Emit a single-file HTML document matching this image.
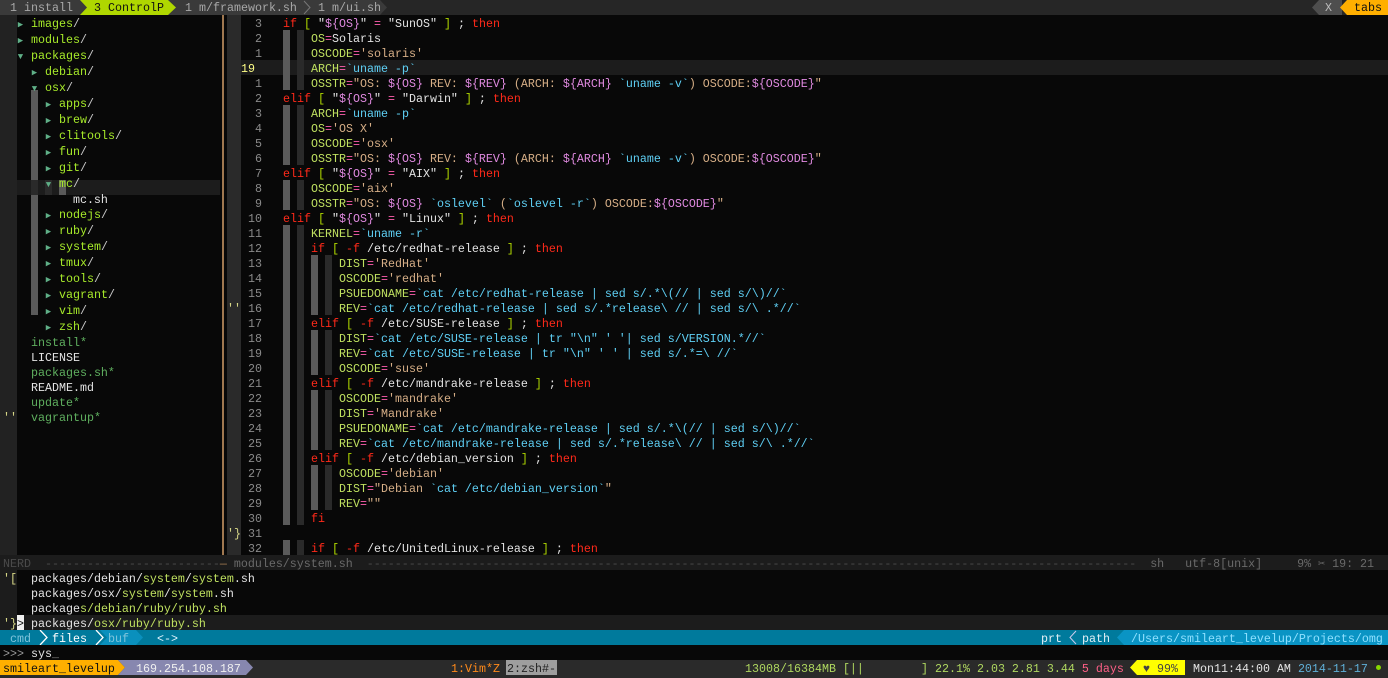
<!DOCTYPE html>
<html><head><meta charset="utf-8"><style>
*{margin:0;padding:0}
body{width:1388px;height:678px;background:#080808;overflow:hidden;position:relative;font-family:"Liberation Mono","DejaVu Sans Mono",monospace;font-size:11.6667px;line-height:15px;color:#e4e4e4}
.abs{position:absolute}
pre{position:absolute;font:inherit;white-space:pre;line-height:15px;padding-top:2px}
i{font-style:normal}
.k{color:#ff2a1a}.b{color:#afd700}.w{color:#e4e4e4}.p{color:#e08ae0}.v{color:#bfe060}.e{color:#ff5faf}.s{color:#d7af87}.c{color:#5fd0f5}
.n{color:#8a8a8a}
.ar{display:inline-block;width:7px;color:#5faf87;font-size:9px;text-align:center}
.dir{color:#a8ec2a}.sl{color:#c8c8c8}.ex{color:#5faf5f}
.ca{display:inline-block;width:7px;height:15px;background:#5a5a5a;vertical-align:top;margin-top:-2px}
.cd{display:inline-block;width:7px;height:15px;background:#2a2a2a;vertical-align:top;margin-top:-2px}
</style></head><body>

<!-- tabline -->
<div class="abs" style="left:0;top:0;width:1388px;height:15px;background:#262626"></div>
<div class="abs" style="left:0;top:0;width:380px;height:15px;background:#3a3a3a"></div>
<svg class="abs" style="left:0;top:0" width="1388" height="15">
<polygon points="80,0 168,0 176,7.5 168,15 80,15 87,7.5" fill="#afd700"/>
<polygon points="380,0 387,7.5 380,15" fill="#3a3a3a"/>
<polyline points="304,1 310,7.5 304,14" fill="none" stroke="#777" stroke-width="1"/>
<polygon points="1312,7.5 1319,0 1342,0 1342,15 1319,15" fill="#4e4e4e"/>
<polygon points="1340,7.5 1347,0 1388,0 1388,15 1347,15" fill="#ffaf00"/>
</svg>
<pre style="left:10px;top:-1px;color:#a8a8a8">1 install</pre>
<pre style="left:94px;top:-1px;color:#111">3 ControlP</pre>
<pre style="left:185px;top:-1px;color:#a8a8a8">1 m/framework.sh</pre>
<pre style="left:318px;top:-1px;color:#a8a8a8">1 m/ui.sh</pre>
<pre style="left:1325px;top:-1px;color:#bcbcbc">X</pre>
<pre style="left:1354px;top:-1px;color:#111">tabs</pre>

<!-- gutters & cursor lines -->
<div class="abs" style="left:0;top:15px;width:17px;height:540px;background:#222"></div>
<div class="abs" style="left:227px;top:15px;width:14px;height:540px;background:#2a2a2a"></div>
<div class="abs" style="left:17px;top:180px;width:203px;height:15px;background:#1c1c1c"></div>
<div class="abs" style="left:241px;top:60px;width:1147px;height:15px;background:#1c1c1c"></div>
<div class="abs" style="left:222px;top:15px;width:2px;height:540px;background:#a07850"></div>
<div class="abs" style="left:31px;top:90px;width:7px;height:225px;background:#5a5a5a"></div>
<div class="abs" style="left:31px;top:180px;width:7px;height:15px;background:#2a2a2a"></div>
<div class="abs" style="left:45px;top:180px;width:7px;height:15px;background:#2a2a2a"></div>
<div class="abs" style="left:59px;top:180px;width:7px;height:15px;background:#5a5a5a"></div>

<!-- tree -->
<pre style="left:3px;top:15px">  <i class=ar>▶</i> <i class=dir>images</i><i class=sl>/</i>
  <i class=ar>▶</i> <i class=dir>modules</i><i class=sl>/</i>
  <i class=ar>▼</i> <i class=dir>packages</i><i class=sl>/</i>
    <i class=ar>▶</i> <i class=dir>debian</i><i class=sl>/</i>
    <i class=ar>▼</i> <i class=dir>osx</i><i class=sl>/</i>
      <i class=ar>▶</i> <i class=dir>apps</i><i class=sl>/</i>
      <i class=ar>▶</i> <i class=dir>brew</i><i class=sl>/</i>
      <i class=ar>▶</i> <i class=dir>clitools</i><i class=sl>/</i>
      <i class=ar>▶</i> <i class=dir>fun</i><i class=sl>/</i>
      <i class=ar>▶</i> <i class=dir>git</i><i class=sl>/</i>
      <i class=ar>▼</i> <i class=dir>mc</i><i class=sl>/</i>
          mc.sh
      <i class=ar>▶</i> <i class=dir>nodejs</i><i class=sl>/</i>
      <i class=ar>▶</i> <i class=dir>ruby</i><i class=sl>/</i>
      <i class=ar>▶</i> <i class=dir>system</i><i class=sl>/</i>
      <i class=ar>▶</i> <i class=dir>tmux</i><i class=sl>/</i>
      <i class=ar>▶</i> <i class=dir>tools</i><i class=sl>/</i>
      <i class=ar>▶</i> <i class=dir>vagrant</i><i class=sl>/</i>
      <i class=ar>▶</i> <i class=dir>vim</i><i class=sl>/</i>
      <i class=ar>▶</i> <i class=dir>zsh</i><i class=sl>/</i>
    <i class=ex>install*</i>
    LICENSE
    <i class=ex>packages.sh*</i>
    README.md
    <i class=ex>update*</i>
<i style="color:#d7d787">''</i>  <i class=ex>vagrantup*</i></pre>

<!-- signs -->
<pre style="left:227px;top:300px;color:#d7d787">''</pre>
<pre style="left:227px;top:525px;color:#d7d787">'}</pre>

<!-- editor -->
<pre style="left:241px;top:15px"><i class=n>  3</i>   <i class=k>if</i> <i class=b>[</i> <i class=w>"</i><i class=p>${OS}</i><i class=w>"</i> <i class=e>=</i> <i class=w>"SunOS"</i> <i class=b>]</i> ; <i class=k>then</i>
<i class=n>  2</i>   <i class=ca></i> <i class=cd></i> <i class=v>OS</i><i class=e>=</i>Solaris
<i class=n>  1</i>   <i class=ca></i> <i class=cd></i> <i class=v>OSCODE</i><i class=e>=</i><i class=s>'solaris'</i>
<i style="color:#ffff87">19</i>    <i class=ca></i> <i class=cd></i> <i class=v>ARCH</i><i class=e>=</i><i class=c>`uname -p`</i>
<i class=n>  1</i>   <i class=ca></i> <i class=cd></i> <i class=v>OSSTR</i><i class=e>=</i><i class=s>"OS: </i><i class=p>${OS}</i><i class=s> REV: </i><i class=p>${REV}</i><i class=s> (ARCH: </i><i class=p>${ARCH}</i><i class=s> </i><i class=c>`uname -v`</i><i class=s>) OSCODE:</i><i class=p>${OSCODE}</i><i class=s>"</i>
<i class=n>  2</i>   <i class=k>elif</i> <i class=b>[</i> <i class=w>"</i><i class=p>${OS}</i><i class=w>"</i> <i class=e>=</i> <i class=w>"Darwin"</i> <i class=b>]</i> ; <i class=k>then</i>
<i class=n>  3</i>   <i class=ca></i> <i class=cd></i> <i class=v>ARCH</i><i class=e>=</i><i class=c>`uname -p`</i>
<i class=n>  4</i>   <i class=ca></i> <i class=cd></i> <i class=v>OS</i><i class=e>=</i><i class=s>'OS X'</i>
<i class=n>  5</i>   <i class=ca></i> <i class=cd></i> <i class=v>OSCODE</i><i class=e>=</i><i class=s>'osx'</i>
<i class=n>  6</i>   <i class=ca></i> <i class=cd></i> <i class=v>OSSTR</i><i class=e>=</i><i class=s>"OS: </i><i class=p>${OS}</i><i class=s> REV: </i><i class=p>${REV}</i><i class=s> (ARCH: </i><i class=p>${ARCH}</i><i class=s> </i><i class=c>`uname -v`</i><i class=s>) OSCODE:</i><i class=p>${OSCODE}</i><i class=s>"</i>
<i class=n>  7</i>   <i class=k>elif</i> <i class=b>[</i> <i class=w>"</i><i class=p>${OS}</i><i class=w>"</i> <i class=e>=</i> <i class=w>"AIX"</i> <i class=b>]</i> ; <i class=k>then</i>
<i class=n>  8</i>   <i class=ca></i> <i class=cd></i> <i class=v>OSCODE</i><i class=e>=</i><i class=s>'aix'</i>
<i class=n>  9</i>   <i class=ca></i> <i class=cd></i> <i class=v>OSSTR</i><i class=e>=</i><i class=s>"OS: </i><i class=p>${OS}</i><i class=s> </i><i class=c>`oslevel`</i><i class=s> (</i><i class=c>`oslevel -r`</i><i class=s>) OSCODE:</i><i class=p>${OSCODE}</i><i class=s>"</i>
<i class=n> 10</i>   <i class=k>elif</i> <i class=b>[</i> <i class=w>"</i><i class=p>${OS}</i><i class=w>"</i> <i class=e>=</i> <i class=w>"Linux"</i> <i class=b>]</i> ; <i class=k>then</i>
<i class=n> 11</i>   <i class=ca></i> <i class=cd></i> <i class=v>KERNEL</i><i class=e>=</i><i class=c>`uname -r`</i>
<i class=n> 12</i>   <i class=ca></i> <i class=cd></i> <i class=k>if</i> <i class=b>[</i> <i class=k>-f</i> /etc/redhat-release <i class=b>]</i> ; <i class=k>then</i>
<i class=n> 13</i>   <i class=ca></i> <i class=cd></i> <i class=ca></i> <i class=cd></i> <i class=v>DIST</i><i class=e>=</i><i class=s>'RedHat'</i>
<i class=n> 14</i>   <i class=ca></i> <i class=cd></i> <i class=ca></i> <i class=cd></i> <i class=v>OSCODE</i><i class=e>=</i><i class=s>'redhat'</i>
<i class=n> 15</i>   <i class=ca></i> <i class=cd></i> <i class=ca></i> <i class=cd></i> <i class=v>PSUEDONAME</i><i class=e>=</i><i class=c>`cat /etc/redhat-release | sed s/.*\(// | sed s/\)//`</i>
<i class=n> 16</i>   <i class=ca></i> <i class=cd></i> <i class=ca></i> <i class=cd></i> <i class=v>REV</i><i class=e>=</i><i class=c>`cat /etc/redhat-release | sed s/.*release\ // | sed s/\ .*//`</i>
<i class=n> 17</i>   <i class=ca></i> <i class=cd></i> <i class=k>elif</i> <i class=b>[</i> <i class=k>-f</i> /etc/SUSE-release <i class=b>]</i> ; <i class=k>then</i>
<i class=n> 18</i>   <i class=ca></i> <i class=cd></i> <i class=ca></i> <i class=cd></i> <i class=v>DIST</i><i class=e>=</i><i class=c>`cat /etc/SUSE-release | tr "\n" ' '| sed s/VERSION.*//`</i>
<i class=n> 19</i>   <i class=ca></i> <i class=cd></i> <i class=ca></i> <i class=cd></i> <i class=v>REV</i><i class=e>=</i><i class=c>`cat /etc/SUSE-release | tr "\n" ' ' | sed s/.*=\ //`</i>
<i class=n> 20</i>   <i class=ca></i> <i class=cd></i> <i class=ca></i> <i class=cd></i> <i class=v>OSCODE</i><i class=e>=</i><i class=s>'suse'</i>
<i class=n> 21</i>   <i class=ca></i> <i class=cd></i> <i class=k>elif</i> <i class=b>[</i> <i class=k>-f</i> /etc/mandrake-release <i class=b>]</i> ; <i class=k>then</i>
<i class=n> 22</i>   <i class=ca></i> <i class=cd></i> <i class=ca></i> <i class=cd></i> <i class=v>OSCODE</i><i class=e>=</i><i class=s>'mandrake'</i>
<i class=n> 23</i>   <i class=ca></i> <i class=cd></i> <i class=ca></i> <i class=cd></i> <i class=v>DIST</i><i class=e>=</i><i class=s>'Mandrake'</i>
<i class=n> 24</i>   <i class=ca></i> <i class=cd></i> <i class=ca></i> <i class=cd></i> <i class=v>PSUEDONAME</i><i class=e>=</i><i class=c>`cat /etc/mandrake-release | sed s/.*\(// | sed s/\)//`</i>
<i class=n> 25</i>   <i class=ca></i> <i class=cd></i> <i class=ca></i> <i class=cd></i> <i class=v>REV</i><i class=e>=</i><i class=c>`cat /etc/mandrake-release | sed s/.*release\ // | sed s/\ .*//`</i>
<i class=n> 26</i>   <i class=ca></i> <i class=cd></i> <i class=k>elif</i> <i class=b>[</i> <i class=k>-f</i> /etc/debian_version <i class=b>]</i> ; <i class=k>then</i>
<i class=n> 27</i>   <i class=ca></i> <i class=cd></i> <i class=ca></i> <i class=cd></i> <i class=v>OSCODE</i><i class=e>=</i><i class=s>'debian'</i>
<i class=n> 28</i>   <i class=ca></i> <i class=cd></i> <i class=ca></i> <i class=cd></i> <i class=v>DIST</i><i class=e>=</i><i class=s>"Debian </i><i class=c>`cat /etc/debian_version`</i><i class=s>"</i>
<i class=n> 29</i>   <i class=ca></i> <i class=cd></i> <i class=ca></i> <i class=cd></i> <i class=v>REV</i><i class=e>=</i><i class=s>""</i>
<i class=n> 30</i>   <i class=ca></i> <i class=cd></i> <i class=k>fi</i>
<i class=n> 31</i>
<i class=n> 32</i>   <i class=ca></i> <i class=cd></i> <i class=k>if</i> <i class=b>[</i> <i class=k>-f</i> /etc/UnitedLinux-release <i class=b>]</i> ; <i class=k>then</i></pre>

<!-- statusline -->
<div class="abs" style="left:0;top:555px;width:1388px;height:15px;background:#1c1c1c"></div>
<pre style="left:3px;top:555px;color:#4a4a4a">NERD  -------------------------<i style="color:#a07850">—</i> <i style="color:#6a6a6a">modules/system.sh</i>  --------------------------------------------------------------------------------------------------------------  <i style="color:#6a6a6a">sh   utf-8[unix]     9% ✂ 19: 21</i></pre>

<!-- ctrlp matches -->
<div class="abs" style="left:0;top:570px;width:17px;height:60px;background:#1c1c1c"></div>
<div class="abs" style="left:17px;top:615px;width:1371px;height:15px;background:#1c1c1c"></div>
<div class="abs" style="left:17px;top:615px;width:7px;height:15px;background:#f0f0f0"></div>
<pre style="left:3px;top:570px"><i style="color:#d7d787">'[</i>  packages/debian/<i class=v>system</i>/<i class=v>system</i>.sh
    packages/osx/<i class=v>system</i>/<i class=v>system</i>.sh
    package<i class=v>s/debian/ruby/ruby.sh</i>
<i style="color:#d7d787">'}</i><i style="color:#111">&gt;</i> packages/<i class=v>osx/ruby/ruby.sh</i></pre>

<!-- ctrlp bar -->
<div class="abs" style="left:0;top:630px;width:1388px;height:15px;background:#007a9c"></div>
<svg class="abs" style="left:0;top:630px" width="1388" height="15">
<polygon points="100,0 136,0 143,7.5 136,15 100,15 107,7.5" fill="#0a90bd"/>
<polyline points="40,0 47,7.5 40,15" fill="none" stroke="#fff" stroke-width="1.3"/>
<polyline points="96,0 103,7.5 96,15" fill="none" stroke="#fff" stroke-width="1.3"/>
<polygon points="1124,0 1388,0 1388,15 1124,15 1117,7.5" fill="#0a94c4"/>
<polyline points="1076,1 1070,7.5 1076,14" fill="none" stroke="#cce" stroke-width="1"/>
</svg>
<pre style="left:10px;top:630px;color:#7fc4dc">cmd</pre>
<pre style="left:52px;top:630px;color:#fff">files</pre>
<pre style="left:108px;top:630px;color:#7fc4dc">buf</pre>
<pre style="left:157px;top:630px;color:#e0f4ff">&lt;-&gt;</pre>
<pre style="left:1041px;top:630px;color:#e0eef5">prt</pre>
<pre style="left:1082px;top:630px;color:#e0eef5">path</pre>
<pre style="left:1131px;top:630px;color:#8ee0ff">/Users/smileart_levelup/Projects/omg</pre>

<!-- prompt -->
<pre style="left:3px;top:645px"><i style="color:#9a9a9a">&gt;&gt;&gt;</i> sys<i style="color:#888">_</i></pre>

<!-- tmux bar -->
<div class="abs" style="left:0;top:660px;width:1388px;height:18px;background:#2a2a2a"></div>
<svg class="abs" style="left:0;top:660px" width="1388" height="15">
<polygon points="0,0 118,0 125,7.5 118,15 0,15" fill="#ffaf00"/>
<polygon points="118,0 246,0 253,7.5 246,15 118,15 125,7.5" fill="#8787af"/>
<rect x="506" y="0" width="51" height="15" fill="#9e9e9e"/>
<polygon points="1137,0 1185,0 1185,15 1137,15 1130,7.5" fill="#ffff00"/>
</svg>
<pre style="left:3px;top:660px;color:#111">smileart_levelup</pre>
<pre style="left:136px;top:660px;color:#f0f0f0">169.254.108.187</pre>
<pre style="left:451px;top:660px;color:#ff8a1a">1:Vim*Z <i style="color:#222">2:zsh#-</i></pre>
<pre style="left:745px;top:660px;color:#afd75f">13008/16384MB [||</pre>
<pre style="left:921px;top:660px;color:#afd75f">] 22.1% 2.03 2.81 3.44 <i style="color:#ff5f87">5 days</i></pre>
<pre style="left:1143px;top:660px;color:#444">♥ 99%</pre>
<pre style="left:1193px;top:660px;color:#e4e4e4">Mon11:44:00 AM <i style="color:#5fafd7">2014-11-17</i></pre>
<div class="abs" style="left:1376px;top:665px;width:5px;height:5px;border-radius:50%;background:#87d700"></div>
</body></html>
